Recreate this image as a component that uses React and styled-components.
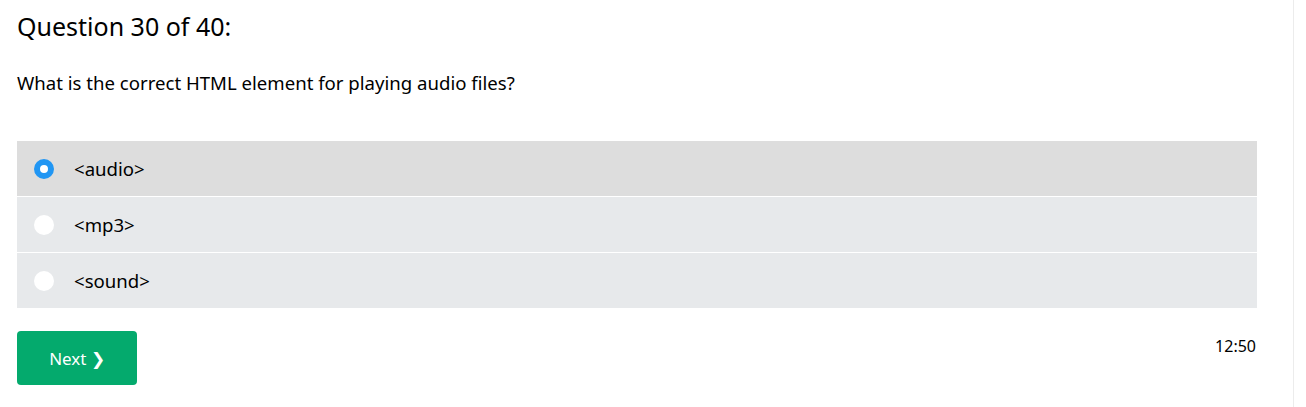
import React, { useState } from "react";
import styled, { createGlobalStyle } from "styled-components";

const options = ["<audio>", "<mp3>", "<sound>"];

function App() {
  const [picked, setPicked] = useState(0);
  return (
    <>
      <GlobalStyle />
      <Page>
        <Main>
          <Heading>Question 30 of 40:</Heading>
          <QuestionText>What is the correct HTML element for playing audio files?</QuestionText>
          <OptionList>
            {options.map((o, i) => (
              <Option key={o} $selected={picked === i} onClick={() => setPicked(i)}>
                <Radio $checked={picked === i} />
                <OptionLabel>{o}</OptionLabel>
              </Option>
            ))}
          </OptionList>
          <Footer>
            <NextButton>Next &#10095;</NextButton>
            <Timer>12:50</Timer>
          </Footer>
        </Main>
        <Gutter />
      </Page>
    </>
  );
}

export default App;

const GlobalStyle = createGlobalStyle`
  html, body { margin: 0; padding: 0; background: #fff; }
  body { font-family: "Noto Sans", "Open Sans", sans-serif; color: #000; }
`;

const Page = styled.div`
  display: flex;
  height: 407px;
`;

const Main = styled.div`
  width: 1240px;
  padding: 0 36px 0 17px;
`;

const Gutter = styled.div`
  width: 12px;
  border-left: 1px solid #ececec;
`;

const Heading = styled.h2`
  margin: 0;
  padding-top: 9px;
  font-size: 25px;
  font-weight: 400;
  line-height: 34px;
`;

const QuestionText = styled.p`
  margin: 27px 0 0;
  font-size: 18.6px;
  line-height: 26px;
`;

const OptionList = styled.div`
  display: flex;
  flex-direction: column;
  gap: 1px;
  margin-top: 45px;
`;

const Option = styled.label`
  display: flex;
  align-items: center;
  height: 55px;
  padding-left: 17px;
  background: ${(p) => (p.$selected ? "#dddddd" : "#e7e9eb")};
  cursor: pointer;
`;

const Radio = styled.span`
  width: 20px;
  height: 20px;
  border-radius: 50%;
  box-sizing: border-box;
  background: #fff;
  border: ${(p) => (p.$checked ? "6px solid #2196f3" : "none")};
`;

const OptionLabel = styled.span`
  margin-left: 20px;
  font-size: 18.6px;
`;

const Footer = styled.div`
  display: flex;
  justify-content: space-between;
  align-items: flex-start;
  margin-top: 23px;
`;

const NextButton = styled.button`
  width: 120px;
  height: 54px;
  border: none;
  border-radius: 4px;
  background: #04aa6d;
  color: #fff;
  font-family: inherit;
  font-size: 17px;
  cursor: pointer;
`;

const Timer = styled.span`
  margin-top: 4px;
  margin-right: 1px;
  font-size: 16px;
`;
